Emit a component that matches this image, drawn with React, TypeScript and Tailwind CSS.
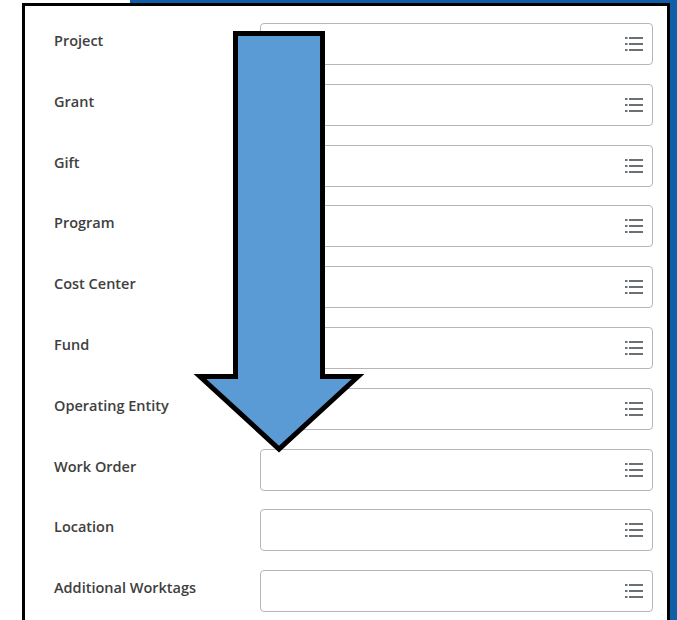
const worktags = [
	"Project",
	"Grant",
	"Gift",
	"Program",
	"Cost Center",
	"Fund",
	"Operating Entity",
	"Work Order",
	"Location",
	"Additional Worktags",
]

function PromptIcon() {
	return (
		<svg width="18" height="14" viewBox="0 0 18 14" fill="#6b7075">
			<rect x="0" y="0" width="2.5" height="2" />
			<rect x="4" y="0" width="14" height="2" />
			<rect x="0" y="6" width="2.5" height="2" />
			<rect x="4" y="6" width="14" height="2" />
			<rect x="0" y="12" width="2.5" height="2" />
			<rect x="4" y="12" width="14" height="2" />
		</svg>
	)
}

function DownArrow() {
	return (
		<svg
			className="pointer-events-none absolute left-0 top-0"
			width="677"
			height="620"
			viewBox="0 0 677 620"
		>
			<path
				d="M235.5 33.5 H322.5 V376.5 H358 L279 449 L200 376.5 H235.5 Z"
				fill="#5b9bd5"
				stroke="#000"
				strokeWidth="5"
				strokeLinejoin="miter"
				strokeMiterlimit="10"
			/>
		</svg>
	)
}

export default function App() {
	return (
		<div className="relative h-[620px] w-[677px] overflow-hidden bg-white font-['Open_Sans',sans-serif]">
			<div className="flex h-[3px]">
				<div className="w-[130px] bg-white" />
				<div className="flex-1 bg-[#0f5fa6]" />
			</div>
			<div className="flex h-[617px]">
				<div className="w-[22px] bg-white" />
				<div className="flex flex-1 flex-col gap-[18.8px] border-x-[3px] border-t-[3px] border-black bg-white pl-[29px] pr-[14px] pt-[17px]">
					{worktags.map((label) => (
						<div key={label} className="flex h-[42px]">
							<div className="w-[206px] pt-[8px] text-[14.5px] font-semibold leading-[20px] text-[#404040]">
								{label}
							</div>
							<div className="flex flex-1 items-center justify-end rounded-[4px] border border-[#b3b7bc] pr-[9px]">
								<PromptIcon />
							</div>
						</div>
					))}
				</div>
				<div className="w-[7px] bg-[#0f5fa6]" />
			</div>
			<DownArrow />
		</div>
	)
}
